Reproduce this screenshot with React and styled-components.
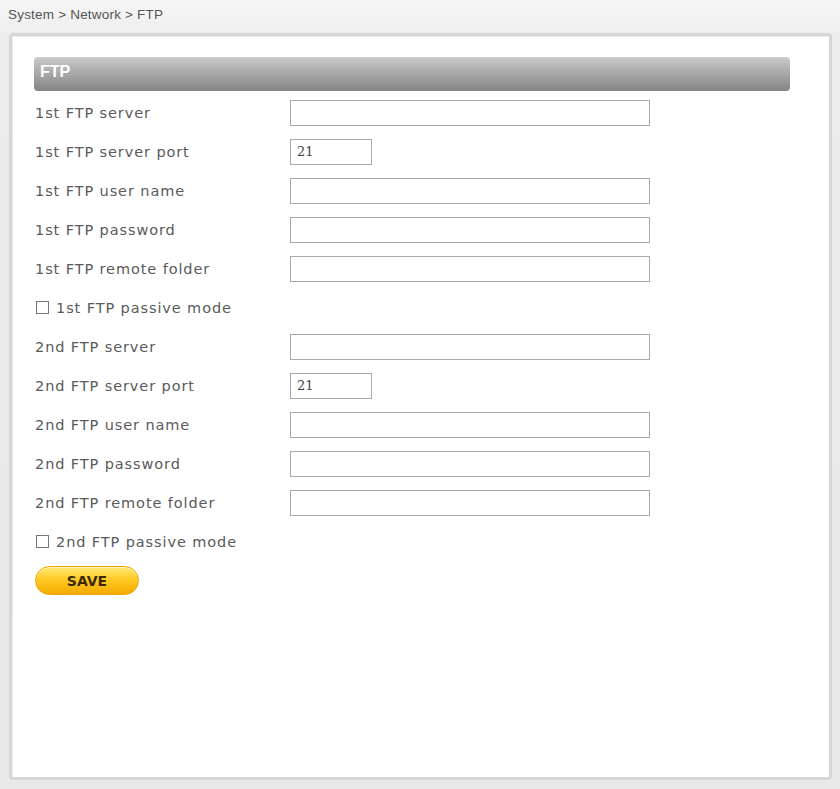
import React from 'react';
import styled, { createGlobalStyle } from 'styled-components';

const GlobalStyle = createGlobalStyle`
  html, body {
    margin: 0;
    padding: 0;
    background: #e6e6e6;
  }
`;

const Page = styled.div`
  width: 840px;
  height: 789px;
  background: linear-gradient(to bottom, #f6f6f6 0%, #ececec 40px, #e8e8e8 100%);
  font-family: 'DejaVu Sans', Verdana, sans-serif;
  overflow: hidden;
`;

const Breadcrumb = styled.div`
  height: 33px;
  padding-left: 8px;
  line-height: 30px;
  font-family: 'Liberation Sans', Arial, sans-serif;
  font-size: 13.5px;
  letter-spacing: 0.2px;
  color: #555;
`;

const Panel = styled.div`
  margin-left: 9px;
  width: 823px;
  height: 747px;
  background: #fff;
  border: 3px solid #d6d6d6;
  border-radius: 4px;
  box-shadow: inset 1px 1px 0 #ececec;
  padding: 21px 0 0 22px;
  box-sizing: border-box;
`;

const Header = styled.div`
  width: 756px;
  height: 34px;
  border-radius: 4px;
  background: linear-gradient(to bottom, #cbcbcb 0%, #aaaaaa 45%, #858585 100%);
  color: #fff;
  font-family: 'Liberation Sans', Arial, sans-serif;
  font-weight: bold;
  font-size: 16px;
  line-height: 29px;
  padding-left: 6px;
  box-sizing: border-box;
  margin-bottom: 2px;
`;

const Row = styled.div`
  display: grid;
  grid-template-columns: 255px auto;
  align-items: center;
  height: 39px;
  padding-left: 1px;
`;

const Label = styled.label`
  font-size: 14.5px;
  color: #5a5a5a;
  letter-spacing: 0.9px;
`;

const TextInput = styled.input`
  width: ${p => p.$width}px;
  height: 26px;
  box-sizing: border-box;
  border: 1px solid #a9a9a9;
  background: #fff;
  font-family: 'DejaVu Serif', 'Liberation Serif', serif;
  font-size: 13px;
  color: #444;
  padding: 0 6px;
  outline: none;
`;

const CheckRow = styled.label`
  display: flex;
  align-items: center;
  gap: 7px;
  height: 39px;
  padding-left: 2px;
  font-size: 14.5px;
  letter-spacing: 0.9px;
  color: #5a5a5a;
`;

const Box = styled.span`
  width: 11px;
  height: 11px;
  border: 1px solid #777;
  background: #fff;
`;

const SaveRow = styled.div`
  display: flex;
  align-items: center;
  height: 39px;
  padding-left: 1px;
`;

const SaveButton = styled.button`
  width: 104px;
  height: 29px;
  border: 1px solid #eaa600;
  border-radius: 15px;
  background: linear-gradient(to bottom, #ffe978 0%, #ffcb26 45%, #f4aa00 100%);
  box-shadow: inset 0 1px 0 #fff5b8;
  font-family: 'DejaVu Sans', Verdana, sans-serif;
  font-weight: bold;
  font-size: 14px;
  color: #3d2a00;
  padding: 0;
  cursor: pointer;
`;

const servers = ['1st', '2nd'];

function ServerBlock({ prefix }) {
  return (
    <>
      <Row>
        <Label>{prefix} FTP server</Label>
        <TextInput $width={360} defaultValue="" />
      </Row>
      <Row>
        <Label>{prefix} FTP server port</Label>
        <TextInput $width={82} defaultValue="21" />
      </Row>
      <Row>
        <Label>{prefix} FTP user name</Label>
        <TextInput $width={360} defaultValue="" />
      </Row>
      <Row>
        <Label>{prefix} FTP password</Label>
        <TextInput $width={360} type="password" defaultValue="" />
      </Row>
      <Row>
        <Label>{prefix} FTP remote folder</Label>
        <TextInput $width={360} defaultValue="" />
      </Row>
      <CheckRow>
        <Box />
        {prefix} FTP passive mode
      </CheckRow>
    </>
  );
}

export default function App() {
  return (
    <Page>
      <GlobalStyle />
      <Breadcrumb>System &gt; Network &gt; FTP</Breadcrumb>
      <Panel>
        <Header>FTP</Header>
        {servers.map(s => (
          <ServerBlock key={s} prefix={s} />
        ))}
        <SaveRow>
          <SaveButton>SAVE</SaveButton>
        </SaveRow>
      </Panel>
    </Page>
  );
}
